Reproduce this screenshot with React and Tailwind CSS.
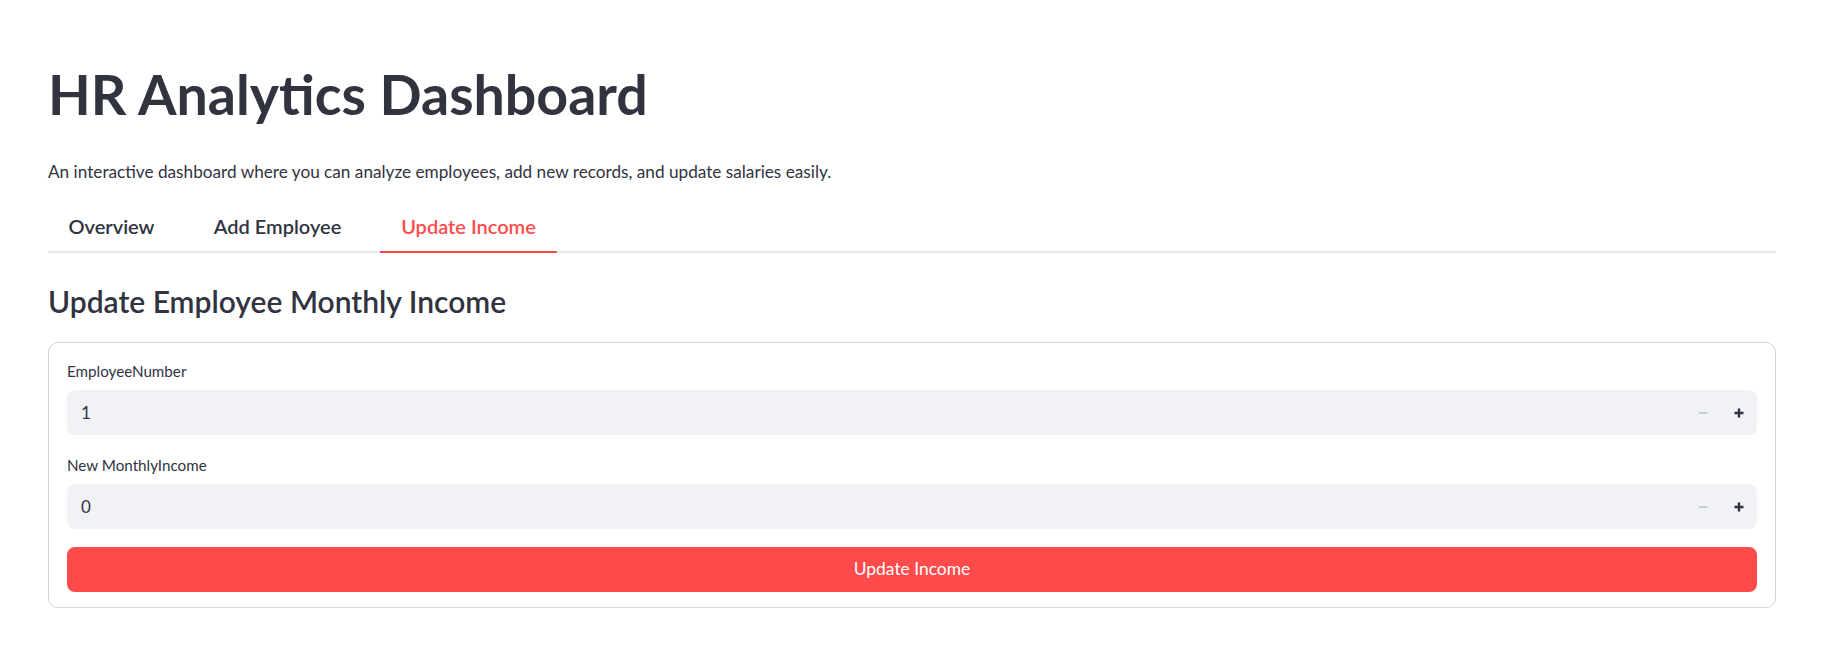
import React, { useState } from "react";

const tabs = [
  { name: "Overview", w: "w-[127px]" },
  { name: "Add Employee", w: "w-[171px]" },
  { name: "Update Income", w: "w-[177px]" },
];

function NumberField({ label, value }) {
  return (
    <div className="flex flex-col">
      <label className="text-[15.2px] leading-[22px] mb-[8px]">{label}</label>
      <div className="h-[45px] rounded-[8px] bg-[#f0f2f6] flex items-center">
        <input
          readOnly
          value={value}
          className="flex-1 bg-transparent outline-none pl-[14px] text-[17px] text-[#31333f]"
        />
        <button className="w-[36px] h-full flex items-center justify-center" disabled>
          <svg width="10" height="10" viewBox="0 0 10 10">
            <path d="M0.5 5h9" stroke="#c9cdd4" strokeWidth="2" />
          </svg>
        </button>
        <button className="w-[36px] h-full flex items-center justify-center">
          <svg width="10" height="10" viewBox="0 0 10 10">
            <path d="M0.5 5h9M5 0.5v9" stroke="#31333f" strokeWidth="2.4" />
          </svg>
        </button>
      </div>
    </div>
  );
}

export default function App() {
  const [active, setActive] = useState(2);

  return (
    <div className="min-h-screen bg-white text-[#31333f] px-[48px] pr-[67px]" style={{ fontFamily: "Lato, 'Noto Sans', sans-serif" }}>
      <h1 className="pt-[61px] text-[55.5px] leading-[66px] font-bold">HR Analytics Dashboard</h1>

      <p className="mt-[31px] text-[17.2px] leading-[28px]">
        An interactive dashboard where you can analyze employees, add new records, and update salaries easily.
      </p>

      {/* Tabs */}
      <div className="mt-[26px] flex gap-[17px] border-b-2 border-[#e6e7ea]">
        {tabs.map((t, i) => (
          <button
            key={t.name}
            onClick={() => setActive(i)}
            className={`${t.w} -mb-[2px] pb-[11px] text-[20px] leading-[28px] font-semibold border-b-2 ${
              active === i ? "text-[#ff4b4b] border-[#ff4b4b]" : "border-transparent"
            }`}
          >
            {t.name}
          </button>
        ))}
      </div>

      <h3 className="mt-[30px] text-[30px] leading-[36px] font-semibold">Update Employee Monthly Income</h3>

      {/* Form card */}
      <div className="mt-[23px] border border-[#d6d6d9] rounded-[10px] px-[18px] pt-[17px] pb-[15px] flex flex-col">
        <NumberField label="EmployeeNumber" value="1" />
        <div className="mt-[19px]">
          <NumberField label="New MonthlyIncome" value="0" />
        </div>
        <button className="mt-[18px] h-[45px] rounded-[8px] bg-[#ff4b4b] text-white text-[17.4px]">Update Income</button>
      </div>
    </div>
  );
}
